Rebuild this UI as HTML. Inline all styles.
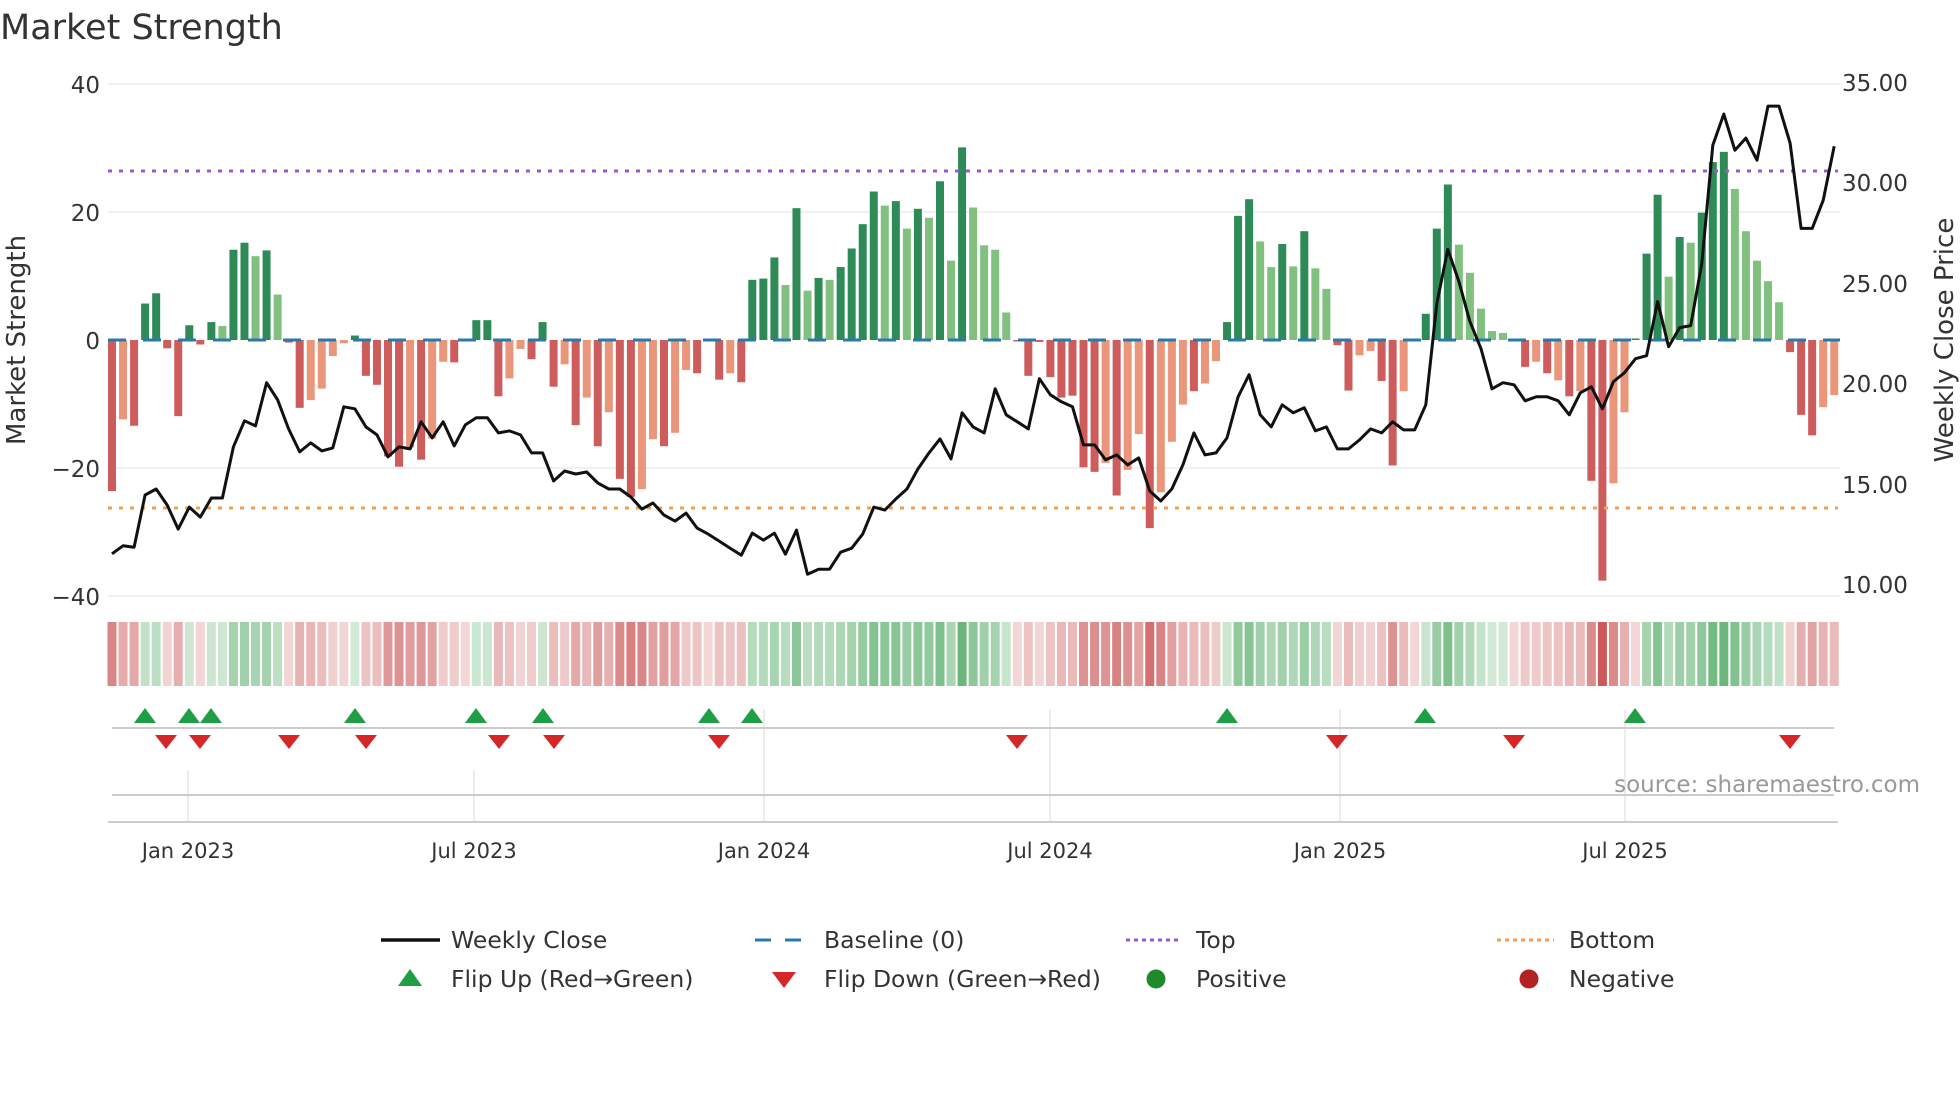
<!DOCTYPE html>
<html><head><meta charset="utf-8">
<style>
html,body{margin:0;padding:0;background:#fff;width:1960px;height:1102px;overflow:hidden}
svg{display:block}
text{font-family:"DejaVu Sans","Liberation Sans",sans-serif;fill:#333}
</style></head><body>
<svg id="s" width="1960" height="1102" viewBox="0 0 1960 1102" xmlns="http://www.w3.org/2000/svg">
<text x="0" y="39" font-size="35">Market Strength</text>
<g stroke="#eef0f5" stroke-width="2">
<line x1="108" y1="84" x2="1840" y2="84"/><line x1="108" y1="212" x2="1840" y2="212"/>
<line x1="108" y1="468" x2="1840" y2="468"/><line x1="108" y1="596" x2="1840" y2="596"/>
</g>
<g font-size="23" text-anchor="end">
<text x="100" y="93">40</text><text x="100" y="221">20</text><text x="100" y="349">0</text>
<text x="100" y="477">−20</text><text x="100" y="605">−40</text>
</g>
<g font-size="23">
<text x="1842" y="91">35.00</text><text x="1842" y="191">30.00</text><text x="1842" y="292">25.00</text>
<text x="1842" y="392">20.00</text><text x="1842" y="493">15.00</text><text x="1842" y="593">10.00</text>
</g>
<text transform="translate(25,340) rotate(-90)" font-size="26" text-anchor="middle">Market Strength</text>
<text transform="translate(1953,340) rotate(-90)" font-size="26" text-anchor="middle">Weekly Close Price</text>
<g id="bars"></g>
<line x1="108" y1="171" x2="1838" y2="171" stroke="#9b59d0" stroke-width="3" stroke-dasharray="4 7"/>
<line x1="108" y1="508" x2="1838" y2="508" stroke="#f0a050" stroke-width="3" stroke-dasharray="4 7"/>
<line x1="108" y1="340" x2="1840" y2="340" stroke="#2a79a8" stroke-width="3" stroke-dasharray="18 17"/>
<polyline id="price" fill="none" stroke="#111" stroke-width="3" stroke-linejoin="round"/>
<g id="heat"></g>
<g stroke="#e6e6e6" stroke-width="1.5">
<line x1="188" y1="770" x2="188" y2="822"/><line x1="474" y1="770" x2="474" y2="822"/>
<line x1="764" y1="710" x2="764" y2="822"/><line x1="1050" y1="710" x2="1050" y2="822"/>
<line x1="1340" y1="710" x2="1340" y2="822"/><line x1="1625" y1="710" x2="1625" y2="822"/>
</g>
<line x1="112" y1="728" x2="1834" y2="728" stroke="#ccc" stroke-width="2"/>
<line x1="112" y1="795" x2="1834" y2="795" stroke="#ccc" stroke-width="2"/>
<line x1="108" y1="822" x2="1838" y2="822" stroke="#ccc" stroke-width="2"/>
<g id="marks"></g>
<text x="1920" y="792" font-size="23" text-anchor="end" style="fill:#999">source: sharemaestro.com</text>
<g font-size="21" text-anchor="middle">
<text x="188" y="858">Jan 2023</text><text x="474" y="858">Jul 2023</text><text x="764" y="858">Jan 2024</text>
<text x="1050" y="858">Jul 2024</text><text x="1340" y="858">Jan 2025</text><text x="1625" y="858">Jul 2025</text>
</g>
<g font-size="23.5">
<line x1="381" y1="940" x2="440" y2="940" stroke="#111" stroke-width="3.5"/>
<text x="451" y="948">Weekly Close</text>
<line x1="755" y1="940" x2="806" y2="940" stroke="#2a79a8" stroke-width="3" stroke-dasharray="16 14"/>
<text x="824" y="948">Baseline (0)</text>
<line x1="1126" y1="940" x2="1181" y2="940" stroke="#9b59d0" stroke-width="3" stroke-dasharray="4 4"/>
<text x="1196" y="948">Top</text>
<line x1="1497" y1="940" x2="1554" y2="940" stroke="#f0a050" stroke-width="3" stroke-dasharray="4 4"/>
<text x="1569" y="948">Bottom</text>
<polygon points="410,969 398,986 422,986" fill="#1e9e45"/>
<text x="451" y="987">Flip Up (Red→Green)</text>
<polygon points="784,988 772,972 796,972" fill="#d62728"/>
<text x="824" y="987">Flip Down (Green→Red)</text>
<circle cx="1156" cy="979" r="9.5" fill="#1f8a2a"/>
<text x="1196" y="987">Positive</text>
<circle cx="1529" cy="979" r="9.5" fill="#b22222"/>
<text x="1569" y="987">Negative</text>
</g>
</svg>
<script>
var V=[-23.6,-12.4,-13.4,5.7,7.3,-1.3,-11.9,2.3,-0.7,2.8,2.2,14.1,15.2,13.1,14.0,7.1,-0.4,-10.6,-9.4,-7.6,-2.5,-0.5,0.7,-5.6,-7.0,-18.2,-19.8,-16.8,-18.7,-15.4,-3.4,-3.5,-0.2,3.1,3.1,-8.8,-6.0,-1.4,-3.0,2.8,-7.3,-3.8,-13.3,-9.0,-16.6,-11.3,-21.7,-24.5,-23.3,-15.5,-16.6,-14.5,-4.7,-5.2,0,-6.2,-5.2,-6.6,9.4,9.6,12.9,8.6,20.6,7.7,9.7,9.4,11.4,14.3,18.1,23.2,21.0,21.7,17.4,20.5,19.1,24.8,12.4,30.1,20.7,14.8,14.1,4.3,-0.2,-5.6,-0.3,-5.8,-9.0,-8.7,-19.9,-20.6,-19.2,-24.3,-20.3,-14.7,-29.4,-23.8,-15.9,-10.1,-8.0,-6.8,-3.3,2.8,19.4,22.0,15.4,11.4,15.0,11.5,17.0,11.2,8.0,-0.8,-7.9,-2.4,-1.7,-6.4,-19.6,-8.0,0,4.1,17.4,24.3,14.9,10.5,4.9,1.4,1.1,-0.2,-4.2,-3.4,-5.2,-6.3,-8.8,-8.0,-22.0,-37.6,-22.4,-11.3,0,13.5,22.7,9.9,16.1,15.2,19.9,27.8,29.4,23.6,17.0,12.4,9.2,5.9,-1.9,-11.7,-14.9,-10.5,-8.6];
var C="rorggrrgrg"+"LggLgLrroo"+"oogrrrroro"+"oroggroorg"+"rorororroo"+"roorrrorgg"+"gLgLgLgggg"+"LgLgLgLgLL"+"LLrrrrrrrr"+"orooroooro"+"ogggLLgLgL"+"Lrroorrorg"+"ggLLLLLrro"+"rororroorg"+"gLgLgggLLL"+"LLrrroo";
var P=[11.57,11.97,11.9,14.5,14.8,14.0,12.8,13.9,13.4,14.35,14.35,16.9,18.2,17.95,20.1,19.25,17.8,16.65,17.1,16.7,16.85,18.9,18.8,17.9,17.5,16.4,16.9,16.8,18.15,17.35,18.15,16.95,18.0,18.35,18.35,17.6,17.7,17.5,16.6,16.6,15.2,15.7,15.55,15.65,15.1,14.8,14.8,14.4,13.8,14.1,13.5,13.2,13.6,12.85,12.55,12.2,11.85,11.5,12.6,12.25,12.6,11.55,12.75,10.55,10.8,10.8,11.65,11.85,12.55,13.9,13.75,14.3,14.8,15.8,16.6,17.3,16.3,18.6,17.9,17.6,19.8,18.5,18.15,17.8,20.3,19.5,19.15,18.9,17.0,17.0,16.25,16.5,16.0,16.35,14.7,14.2,14.8,16.0,17.6,16.5,16.6,17.35,19.4,20.5,18.5,17.9,19.0,18.6,18.85,17.7,17.9,16.8,16.8,17.25,17.8,17.6,18.15,17.75,17.75,19.0,24.05,26.75,25.15,23.15,21.8,19.8,20.1,20.0,19.2,19.4,19.4,19.2,18.5,19.6,19.9,18.8,20.15,20.6,21.3,21.45,24.15,21.9,22.85,22.95,26.05,31.95,33.5,31.7,32.3,31.2,33.9,33.9,32.05,27.8,27.8,29.2,31.9];
var NS="http://www.w3.org/2000/svg";
function el(t,a,p){var e=document.createElementNS(NS,t);for(var k in a)e.setAttribute(k,a[k]);p.appendChild(e);return e;}
var bars=document.getElementById('bars'),heat=document.getElementById('heat');
var X0=112,DX=11.04,Y0=340,K=6.4;
var pos=["#2e8b57","#82c07f"],neg=["#cd5c5c","#e9967a"];
for(var i=0;i<V.length;i++){
 var v=V[i],x=X0+i*DX,c;
 var ch=C.charAt(i)||(v>=0?'g':'r');
 if(v>=0)c=(ch=='L')?pos[1]:pos[0];else c=(ch=='o')?neg[1]:neg[0];
 var h=Math.abs(v)*K; if(h<1.5)h=1.5;
 el('rect',{x:x-4,y:v>=0?Y0-h:Y0,width:8,height:h,fill:c},bars);
 var a=0.22+0.7*Math.min(1,Math.abs(v)/36);
 var hc=v>0.5?'rgba(70,165,90,'+a+')':'rgba(200,75,75,'+a+')';
 el('rect',{x:x-4.5,y:622,width:9,height:64,fill:hc},heat);
}
var pts=[];for(var i=0;i<P.length;i++){pts.push((X0+i*DX).toFixed(1)+','+(84+(35-P[i])*20.05).toFixed(1));}
document.getElementById('price').setAttribute('points',pts.join(' '));
var m=document.getElementById('marks');
[145,189,211,355,476,543,709,752,1227,1425,1635].forEach(function(x){el('polygon',{points:x+',708 '+(x-11)+',723 '+(x+11)+',723',fill:'#1e9e45'},m);});
[166,200,289,366,499,554,719,1017,1337,1514,1790].forEach(function(x){el('polygon',{points:x+',749 '+(x-11)+',735 '+(x+11)+',735',fill:'#d62728'},m);});
</script>
</body></html>
